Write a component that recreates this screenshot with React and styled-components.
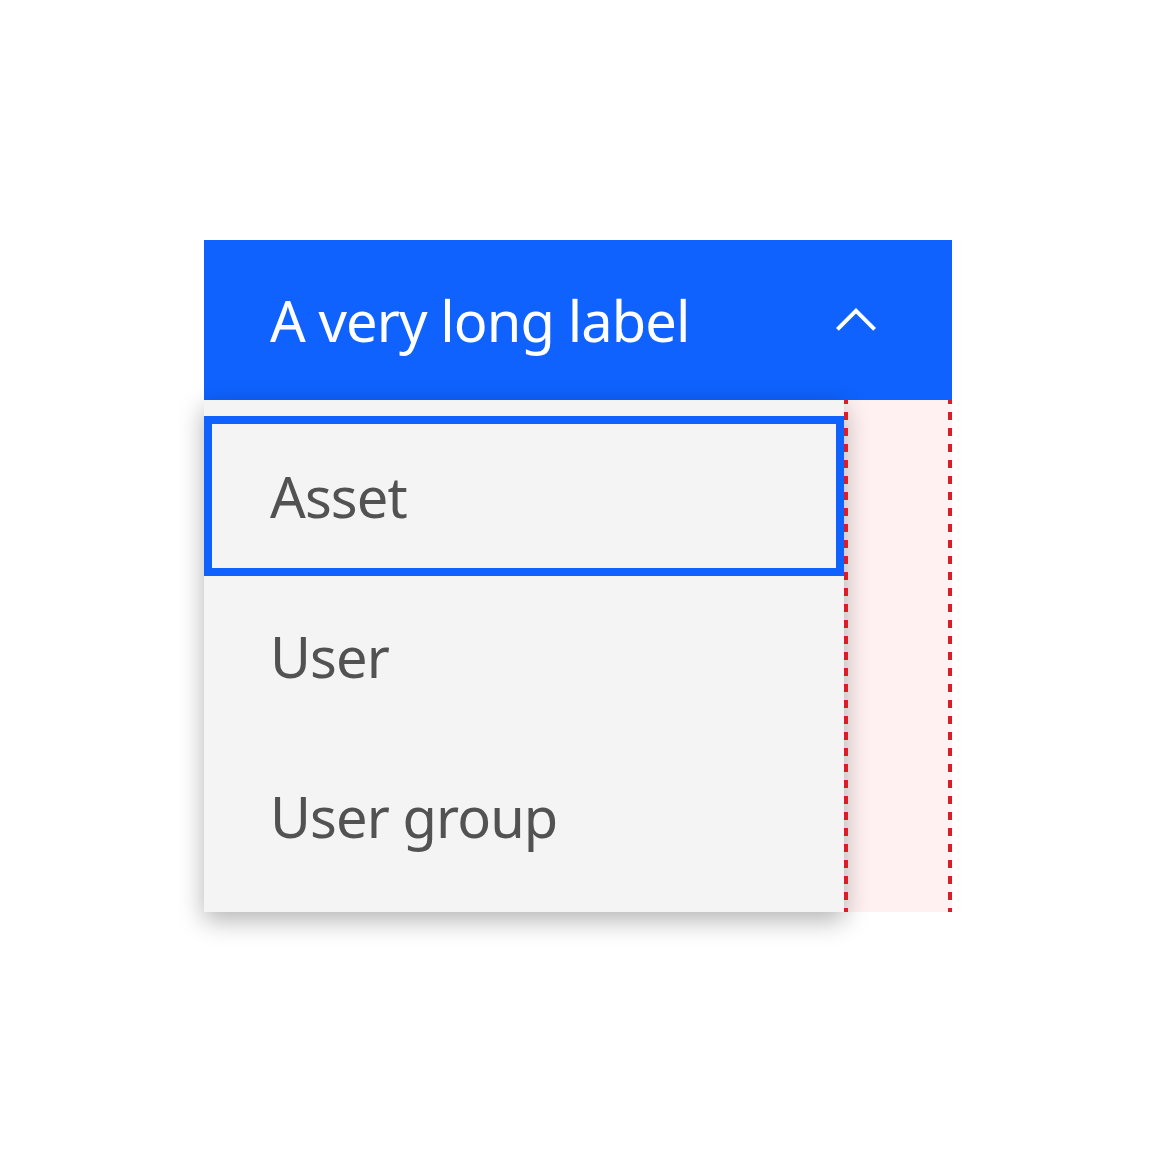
import React from "react";
import styled, { createGlobalStyle } from "styled-components";

const Global = createGlobalStyle`
  html, body { margin: 0; padding: 0; background: #ffffff; }
  body { font-family: "Noto Sans", "Open Sans", sans-serif; }
`;

const Page = styled.div`
  width: 1152px;
  height: 1152px;
  box-sizing: border-box;
  padding: 240px 0 0 204px;
`;

const Dropdown = styled.div`
  width: 748px;
  display: flex;
  flex-direction: column;
`;

const Header = styled.button`
  height: 160px;
  border: 0;
  margin: 0;
  padding: 0 64px 0 66px;
  background: #0f62fe;
  color: #ffffff;
  display: flex;
  align-items: center;
  justify-content: space-between;
  font-family: inherit;
  font-size: 56px;
  letter-spacing: -0.9px;
  font-weight: 400;
  cursor: pointer;
`;

const Label = styled.span`
  line-height: 1;
`;

const Body = styled.div`
  display: flex;
  align-items: stretch;
`;

const Menu = styled.ul`
  position: relative;
  z-index: 2;
  list-style: none;
  margin: 0;
  padding: 16px 0;
  width: 640px;
  background: #f4f4f4;
  box-shadow: 0 8px 24px rgba(0, 0, 0, 0.3);
`;

const Item = styled.li`
  height: 160px;
  box-sizing: border-box;
  display: flex;
  align-items: center;
  padding: 0 56px 0 58px;
  font-size: 56px;
  letter-spacing: -0.9px;
  color: #525252;
  border: 8px solid ${(p) => (p.$focused ? "#0f62fe" : "transparent")};
`;

const Overflow = styled.div`
  position: relative;
  width: 108px;
  background: #fff1f1;

  &::before,
  &::after {
    content: "";
    position: absolute;
    z-index: 3;
    top: 0;
    bottom: 0;
    width: 4px;
    background-image: repeating-linear-gradient(
      to bottom,
      #da1e28 0 8px,
      transparent 8px 16px
    );
    background-position: 0 -4px;
  }
  &::before { left: 0; }
  &::after { right: 0; }
`;

const Chevron = () => (
  <svg width="64" height="64" viewBox="0 0 16 16" fill="#ffffff" aria-hidden="true">
    <path d="M8 5L13 10 12.3 10.7 8 6.4 3.7 10.7 3 10z" />
  </svg>
);

export default function App() {
  return (
    <>
      <Global />
      <Page>
        <Dropdown>
          <Header>
            <Label>A very long label</Label>
            <Chevron />
          </Header>
          <Body>
            <Menu>
              <Item $focused>Asset</Item>
              <Item>User</Item>
              <Item>User group</Item>
            </Menu>
            <Overflow />
          </Body>
        </Dropdown>
      </Page>
    </>
  );
}
